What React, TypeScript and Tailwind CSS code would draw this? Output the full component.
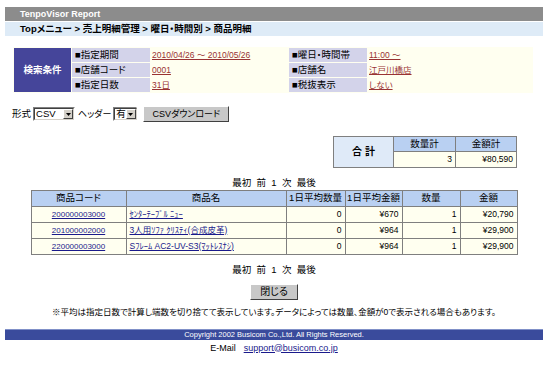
import React from "react";

const rows = [
  { code: "200000003000", name: "ｾﾝﾀｰﾃｰﾌﾞﾙ ﾆｭｰ", avgQ: "0", avgA: "¥670", qty: "1", amt: "¥20,790" },
  { code: "201000002000", name: "3人用ｿﾌｧ ｸﾘｽﾃｨ(合成皮革)", avgQ: "0", avgA: "¥964", qty: "1", amt: "¥29,900" },
  { code: "220000003000", name: "Sﾌﾚｰﾑ AC2-UV-S3(ﾏｯﾄﾚｽﾅｼ)", avgQ: "0", avgA: "¥964", qty: "1", amt: "¥29,900" },
];

function Select({ value, w }: { value: string; w: string }) {
  return (
    <div className={`flex h-[14px] ${w} items-stretch border border-t-[#808080] border-l-[#808080] border-b-white border-r-white bg-white`}>
      <div className="flex flex-1 items-center border border-t-[#404040] border-l-[#404040] border-b-[#d4d0c8] border-r-[#d4d0c8] pl-[1px] text-[9.5px] leading-none">
        <span className="flex-1">{value}</span>
        <span className="flex h-[10px] w-[10px] items-center justify-center border border-t-white border-l-white border-b-[#404040] border-r-[#404040] bg-[#d4d0c8]">
          <svg width="5" height="3" viewBox="0 0 5 3"><path d="M0 0h5L2.5 3z" fill="#000" /></svg>
        </span>
      </div>
    </div>
  );
}

export default function App() {
  const th = "border border-[#7f7f7f] bg-[#b9d0f2] h-[16px] font-normal text-center";
  const td = "border border-[#7f7f7f] bg-[#fffff0] h-[16px] px-[3px]";
  const link = "text-[#993333] underline text-[8.5px]";
  return (
    <div className="w-[550px] h-[368px] overflow-hidden bg-white text-[9px] leading-none text-black [font-family:'Liberation_Sans','Noto_Sans_CJK_JP',sans-serif] [font-feature-settings:'palt']">
      <div className="ml-[5px] w-[538px] pt-[7px]">
        <div className="flex h-[14px] items-center bg-[#8c8c8c] pl-[15px] text-[9px] font-bold text-white">TenpoVisor Report</div>
        <div className="mt-[1px] flex h-[14px] items-center bg-[#deebf7] pl-[15px] text-[9.5px] font-bold">
          Topメニュー &gt; 売上明細管理 &gt; 曜日・時間別 &gt; 商品明細
        </div>

        <table className="ml-[8px] mt-[11px] w-[520px] border-separate border-spacing-[1px] bg-[#fffff0] text-[9.5px]">
          <tbody>
            <tr className="h-[14px]">
              <td rowSpan={3} className="w-[57px] bg-[#45459a] text-center font-bold text-white">検索条件</td>
              <td className="w-[78px] bg-[#d3d3ea] pl-[3px]">■指定期間</td>
              <td className="w-[137px] pl-[1px]"><span className={link}>2010/04/26 ～ 2010/05/26</span></td>
              <td className="w-[78px] bg-[#d3d3ea] pl-[3px]">■曜日・時間帯</td>
              <td className="pl-[1px]"><span className={link}>11:00 ～</span></td>
            </tr>
            <tr className="h-[14px]">
              <td className="bg-[#d3d3ea] pl-[3px]">■店舗コード</td>
              <td className="pl-[1px]"><span className={link}>0001</span></td>
              <td className="bg-[#d3d3ea] pl-[3px]">■店舗名</td>
              <td className="pl-[1px]"><span className={link}>江戸川橋店</span></td>
            </tr>
            <tr className="h-[14px]">
              <td className="bg-[#d3d3ea] pl-[3px]">■指定日数</td>
              <td className="pl-[1px]"><span className={link}>31日</span></td>
              <td className="bg-[#d3d3ea] pl-[3px]">■税抜表示</td>
              <td className="pl-[1px]"><span className={link}>しない</span></td>
            </tr>
          </tbody>
        </table>

        <div className="ml-[7px] mt-[13px] flex h-[16px] items-center gap-[2px] text-[9.5px]">
          <span>形式</span>
          <Select value="CSV" w="w-[42px]" />
          <span className="ml-[1px] text-[9px]">ヘッダー</span>
          <Select value="有" w="w-[24px]" />
          <div className="ml-[4px] flex h-[16px] w-[86px] items-center justify-center border border-t-white border-l-white border-b-[#404040] border-r-[#404040] bg-[#c8c8c8] text-[9px]">CSVダウンロード</div>
        </div>

        <div className="mt-[14px] flex justify-end pr-[26px]">
          <table className="w-[184px] border-collapse border border-black text-[9.5px]">
            <tbody>
              <tr className="h-[15px]">
                <td rowSpan={2} className="w-[60px] border border-[#7f7f7f] bg-[#dfeaf8] text-center text-[10px] font-bold">合 計</td>
                <td className="w-[62px] border border-[#7f7f7f] bg-[#b9d0f2] text-center">数量計</td>
                <td className="border border-[#7f7f7f] bg-[#b9d0f2] text-center">金額計</td>
              </tr>
              <tr className="h-[16px] text-[8.5px]">
                <td className="border border-[#7f7f7f] bg-[#fffff0] pr-[3px] text-right">3</td>
                <td className="border border-[#7f7f7f] bg-[#fffff0] pr-[3px] text-right">¥80,590</td>
              </tr>
            </tbody>
          </table>
        </div>

        <div className="mt-[10px] flex justify-center text-[9.5px]">最初&nbsp; 前&nbsp; 1&nbsp; 次&nbsp; 最後</div>

        <table className="mx-auto mt-[2px] w-[487px] border-collapse border border-black text-[9.5px]">
          <thead>
            <tr>
              <th className={`${th} w-[95px]`}>商品コード</th>
              <th className={`${th} w-[160px]`}>商品名</th>
              <th className={`${th} w-[59px]`}>1日平均数量</th>
              <th className={`${th} w-[57px]`}>1日平均金額</th>
              <th className={`${th} w-[58px]`}>数量</th>
              <th className={th}>金額</th>
            </tr>
          </thead>
          <tbody className="text-[8.5px]">
            {rows.map((r) => (
              <tr key={r.code}>
                <td className={`${td} text-center`}><span className="text-[8px] text-[#1a1a8c] underline">{r.code}</span></td>
                <td className={td}><span className="text-[#1a1a8c] underline">{r.name}</span></td>
                <td className={`${td} text-right`}>{r.avgQ}</td>
                <td className={`${td} text-right`}>{r.avgA}</td>
                <td className={`${td} text-right`}>{r.qty}</td>
                <td className={`${td} text-right`}>{r.amt}</td>
              </tr>
            ))}
          </tbody>
        </table>

        <div className="mt-[10px] flex justify-center text-[9.5px]">最初&nbsp; 前&nbsp; 1&nbsp; 次&nbsp; 最後</div>

        <div className="mt-[10px] flex justify-center">
          <div className="flex h-[16px] w-[48px] items-center justify-center border border-t-white border-l-white border-b-[#404040] border-r-[#404040] bg-[#c8c8c8] text-[10px]">閉じる</div>
        </div>

        <div className="mt-[8px] flex justify-center text-[8.5px]">※平均は指定日数で計算し端数を切り捨てて表示しています。データによっては数量、金額が0で表示される場合もあります。</div>

        <div className="mt-[12px] flex h-[11px] items-center justify-center border-t border-[#8090c8] bg-[#3a4b9c] text-[7.5px] text-white">Copyright 2002 Busicom Co.,Ltd. All Rights Reserved.</div>

        <div className="mt-[4px] flex justify-center gap-[8px] text-[9px]">
          <span>E-Mail</span>
          <span className="text-[#1a1a8c] underline">support@busicom.co.jp</span>
        </div>
      </div>
    </div>
  );
}
